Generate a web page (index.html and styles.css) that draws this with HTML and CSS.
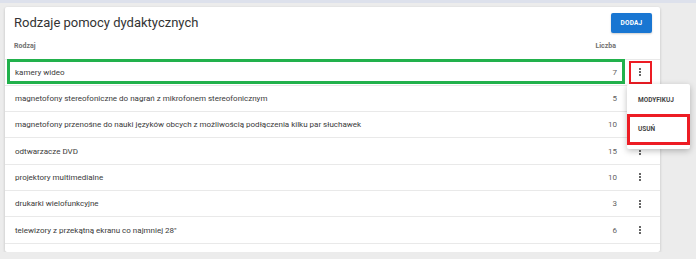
FILE: index.html
```html
<!DOCTYPE html>
<html lang="pl">
<head>
  <meta charset="UTF-8" />
  <meta name="viewport" content="width=device-width, initial-scale=1.0" />
  <title>Rodzaje pomocy dydaktycznych</title>
  <link rel="stylesheet" href="styles.css">
</head>
<body>
  <div class="topbar"></div>
  <div class="card">
    <div class="card-head">
      <h1>Rodzaje pomocy dydaktycznych</h1>
      <button class="btn">DODAJ</button>
    </div>
    <div class="row head">
      <span>Rodzaj</span>
      <span class="num">Liczba</span>
      <span></span>
    </div>
    <div class="row marked">
      <span>kamery wideo</span>
      <span class="num">7</span>
      <span class="act"><button class="kebab active"><svg viewBox="0 0 24 24"><path d="M12 8c1.1 0 2-.9 2-2s-.9-2-2-2-2 .9-2 2 .9 2 2 2zm0 2c-1.1 0-2 .9-2 2s.9 2 2 2 2-.9 2-2-.9-2-2-2zm0 6c-1.1 0-2 .9-2 2s.9 2 2 2 2-.9 2-2-.9-2-2-2z"/></svg></button></span>
    </div>
    <div class="row">
      <span>magnetofony stereofoniczne do nagrań z mikrofonem stereofonicznym</span>
      <span class="num">5</span>
      <span class="act"></span>
    </div>
    <div class="row">
      <span>magnetofony przenośne do nauki języków obcych z możliwością podłączenia kilku par słuchawek</span>
      <span class="num">10</span>
      <span class="act"></span>
    </div>
    <div class="row">
      <span>odtwarzacze DVD</span>
      <span class="num">15</span>
      <span class="act"><button class="kebab"><svg viewBox="0 0 24 24"><path d="M12 8c1.1 0 2-.9 2-2s-.9-2-2-2-2 .9-2 2 .9 2 2 2zm0 2c-1.1 0-2 .9-2 2s.9 2 2 2 2-.9 2-2-.9-2-2-2zm0 6c-1.1 0-2 .9-2 2s.9 2 2 2 2-.9 2-2-.9-2-2-2z"/></svg></button></span>
    </div>
    <div class="row">
      <span>projektory multimedialne</span>
      <span class="num">10</span>
      <span class="act"><button class="kebab"><svg viewBox="0 0 24 24"><path d="M12 8c1.1 0 2-.9 2-2s-.9-2-2-2-2 .9-2 2 .9 2 2 2zm0 2c-1.1 0-2 .9-2 2s.9 2 2 2 2-.9 2-2-.9-2-2-2zm0 6c-1.1 0-2 .9-2 2s.9 2 2 2 2-.9 2-2-.9-2-2-2z"/></svg></button></span>
    </div>
    <div class="row">
      <span>drukarki wielofunkcyjne</span>
      <span class="num">3</span>
      <span class="act"><button class="kebab"><svg viewBox="0 0 24 24"><path d="M12 8c1.1 0 2-.9 2-2s-.9-2-2-2-2 .9-2 2 .9 2 2 2zm0 2c-1.1 0-2 .9-2 2s.9 2 2 2 2-.9 2-2-.9-2-2-2zm0 6c-1.1 0-2 .9-2 2s.9 2 2 2 2-.9 2-2-.9-2-2-2z"/></svg></button></span>
    </div>
    <div class="row">
      <span>telewizory z przekątną ekranu co najmniej 28"</span>
      <span class="num">6</span>
      <span class="act"><button class="kebab"><svg viewBox="0 0 24 24"><path d="M12 8c1.1 0 2-.9 2-2s-.9-2-2-2-2 .9-2 2 .9 2 2 2zm0 2c-1.1 0-2 .9-2 2s.9 2 2 2 2-.9 2-2-.9-2-2-2zm0 6c-1.1 0-2 .9-2 2s.9 2 2 2 2-.9 2-2-.9-2-2-2z"/></svg></button></span>
    </div>

    <!-- menu kontekstowe dla pierwszego wiersza -->
    <div class="menu">
      <div class="menu-item">MODYFIKUJ</div>
      <div class="menu-item marked-red">USUŃ</div>
    </div>
  </div>
</body>
</html>
```

FILE: styles.css
```css
body {
  margin: 0;
  background: #ececec;
  font-family: Roboto, "Liberation Sans", sans-serif;
  color: #3a3a3a;
}
.topbar {
  height: 3px;
  background: #dde1ec;
}
.card {
  position: relative;
  margin: 4px 0 0 5px;
  width: 655px;
  background: white;
  border-radius: 2px;
  box-shadow: 0 1px 3px rgba(0,0,0,0.2);
  padding: 6px 0 8px;
}
.card-head {
  display: flex;
  align-items: center;
  justify-content: space-between;
  padding: 0 8px 0 9px;
  height: 20px;
}
h1 {
  margin: 0;
  font-size: 13px;
  font-weight: 400;
  line-height: 20px;
  color: #333;
}
.btn {
  width: 41px;
  height: 20px;
  border: none;
  border-radius: 2px;
  background: #1976d2;
  color: white;
  font-family: inherit;
  font-size: 6.5px;
  font-weight: 700;
  letter-spacing: 0.2px;
  padding: 0;
  box-shadow: 0 1px 2px rgba(0,0,0,0.2);
}
.row {
  position: relative;
  display: grid;
  grid-template-columns: 1fr 40px 40px;
  align-items: center;
  box-sizing: border-box;
  height: 26.33px;
  padding-left: 10px;
  border-bottom: 1px solid #e9e9e9;
  font-size: 8px;
}
.row.head {
  height: 26.5px;
  padding-left: 9px;
  font-size: 7px;
  font-weight: 700;
  color: #707070;
}
.num {
  text-align: right;
  padding-right: 3px;
  color: #5f5f5f;
}
.row.head .num {
  padding-right: 4px;
  color: #707070;
}
.act {
  display: flex;
  justify-content: center;
}
.kebab {
  width: 23px;
  height: 23px;
  border: none;
  background: none;
  padding: 0;
  display: flex;
  align-items: center;
  justify-content: center;
}
.kebab svg {
  width: 12px;
  height: 12px;
  fill: #444;
}
.kebab.active {
  border: 2.5px solid #ed1c24;
  box-sizing: border-box;
}
.marked::after {
  content: "";
  position: absolute;
  left: 2px;
  top: -1px;
  width: 618px;
  height: 25px;
  box-sizing: border-box;
  border: 3px solid #22b14c;
}
.menu {
  position: absolute;
  left: 622px;
  top: 77px;
  width: 63px;
  padding: 3px 0 4px;
  background: white;
  box-shadow: 0 2px 6px rgba(0,0,0,0.25);
  border-radius: 2px;
}
.menu-item {
  height: 27px;
  line-height: 27px;
  padding-left: 11px;
  font-size: 6.5px;
  font-weight: 700;
  color: #444;
  box-sizing: border-box;
}
.menu-item.marked-red {
  border: 3px solid #ed1c24;
  line-height: 25px;
  height: 31px;
  padding-left: 8px;
}
```
